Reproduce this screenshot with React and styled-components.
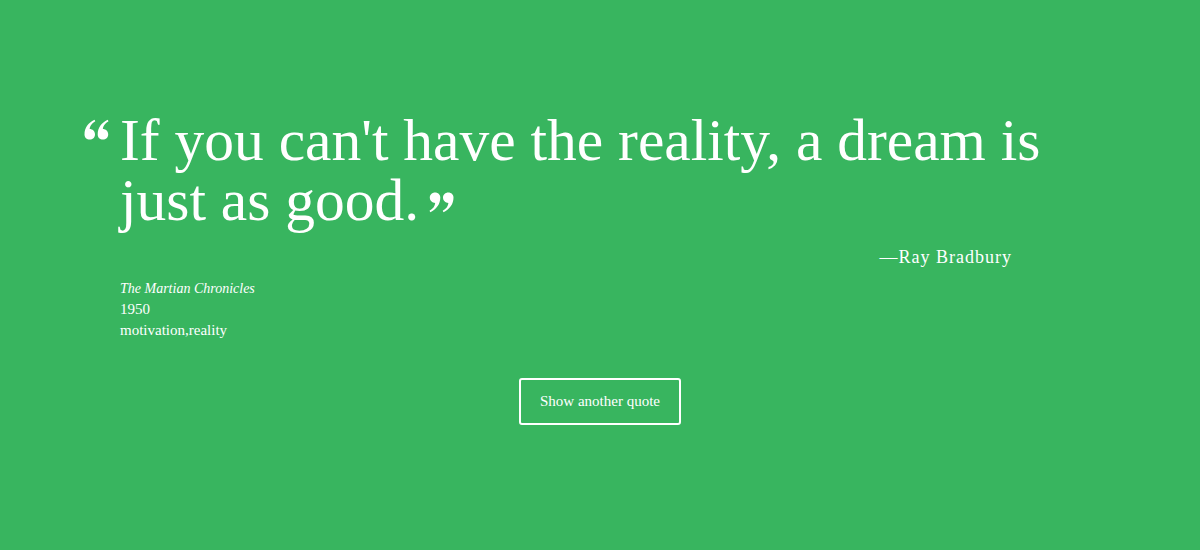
import React from "react";
import styled, { createGlobalStyle } from "styled-components";

const Global = createGlobalStyle`
  html, body { margin: 0; padding: 0; }
  body {
    background: #38b55f;
    font-family: "Liberation Serif", "DejaVu Serif", serif;
    color: #fff;
  }
`;

const Page = styled.main`
  width: 1200px;
  height: 550px;
  box-sizing: border-box;
  padding-top: 110px;
  display: flex;
  flex-direction: column;
  align-items: center;
`;

const Card = styled.section`
  width: 1040px;
  box-sizing: border-box;
  padding: 0 40px;
`;

const Quote = styled.blockquote`
  margin: 0;
  width: 940px;
  font-size: 59.5px;
  line-height: 60px;
  font-weight: 400;
`;

const MarkSvg = styled.svg`
  display: inline-block;
  width: 25px;
  height: 21px;
  fill: #fff;
  vertical-align: ${(p) => (p.$open ? "20px" : "7px")};
  margin-left: ${(p) => (p.$open ? "-36px" : "10px")};
  margin-right: ${(p) => (p.$open ? "11px" : "0")};
  transform: ${(p) => (p.$open ? "none" : "rotate(180deg)")};
`;

const QuoteMark = ({ open }) => (
  <MarkSvg $open={open} viewBox="0 0 25 21" aria-hidden="true">
    <path d="M0.5 15.5 C0.5 9 4 4 10.5 0.8 L11.3 2.2 C7.5 4.6 5.8 7.2 5.6 10.1 C8.6 10.1 11 12.3 11 15.4 C11 18.4 8.6 20.6 5.8 20.6 C2.6 20.6 0.5 18.4 0.5 15.5 Z" />
    <path d="M13.7 15.5 C13.7 9 17.2 4 23.7 0.8 L24.5 2.2 C20.7 4.6 19 7.2 18.8 10.1 C21.8 10.1 24.2 12.3 24.2 15.4 C24.2 18.4 21.8 20.6 19 20.6 C15.8 20.6 13.7 18.4 13.7 15.5 Z" />
  </MarkSvg>
);

const Author = styled.p`
  margin: 17px 68px 0 0;
  text-align: right;
  font-size: 18px;
  letter-spacing: 1px;
`;

const Meta = styled.div`
  margin-top: 10px;
  font-size: 15px;
  line-height: 21px;
`;

const Title = styled.div`
  font-style: italic;
  font-size: 14px;
`;

const Button = styled.button`
  margin-top: 37px;
  width: 162px;
  height: 47px;
  background: transparent;
  color: #fff;
  border: 2px solid #fff;
  border-radius: 3px;
  font-family: "Liberation Serif", "DejaVu Serif", serif;
  font-size: 15px;
  cursor: pointer;
`;

export default function App() {
  return (
    <>
      <Global />
      <Page>
        <Card>
          <Quote>
            <QuoteMark open />
            If you can't have the reality, a dream is just as good.
            <QuoteMark />
          </Quote>
          <Author>—Ray Bradbury</Author>
          <Meta>
            <Title>The Martian Chronicles</Title>
            <div>1950</div>
            <div>motivation,reality</div>
          </Meta>
        </Card>
        <Button>Show another quote</Button>
      </Page>
    </>
  );
}
